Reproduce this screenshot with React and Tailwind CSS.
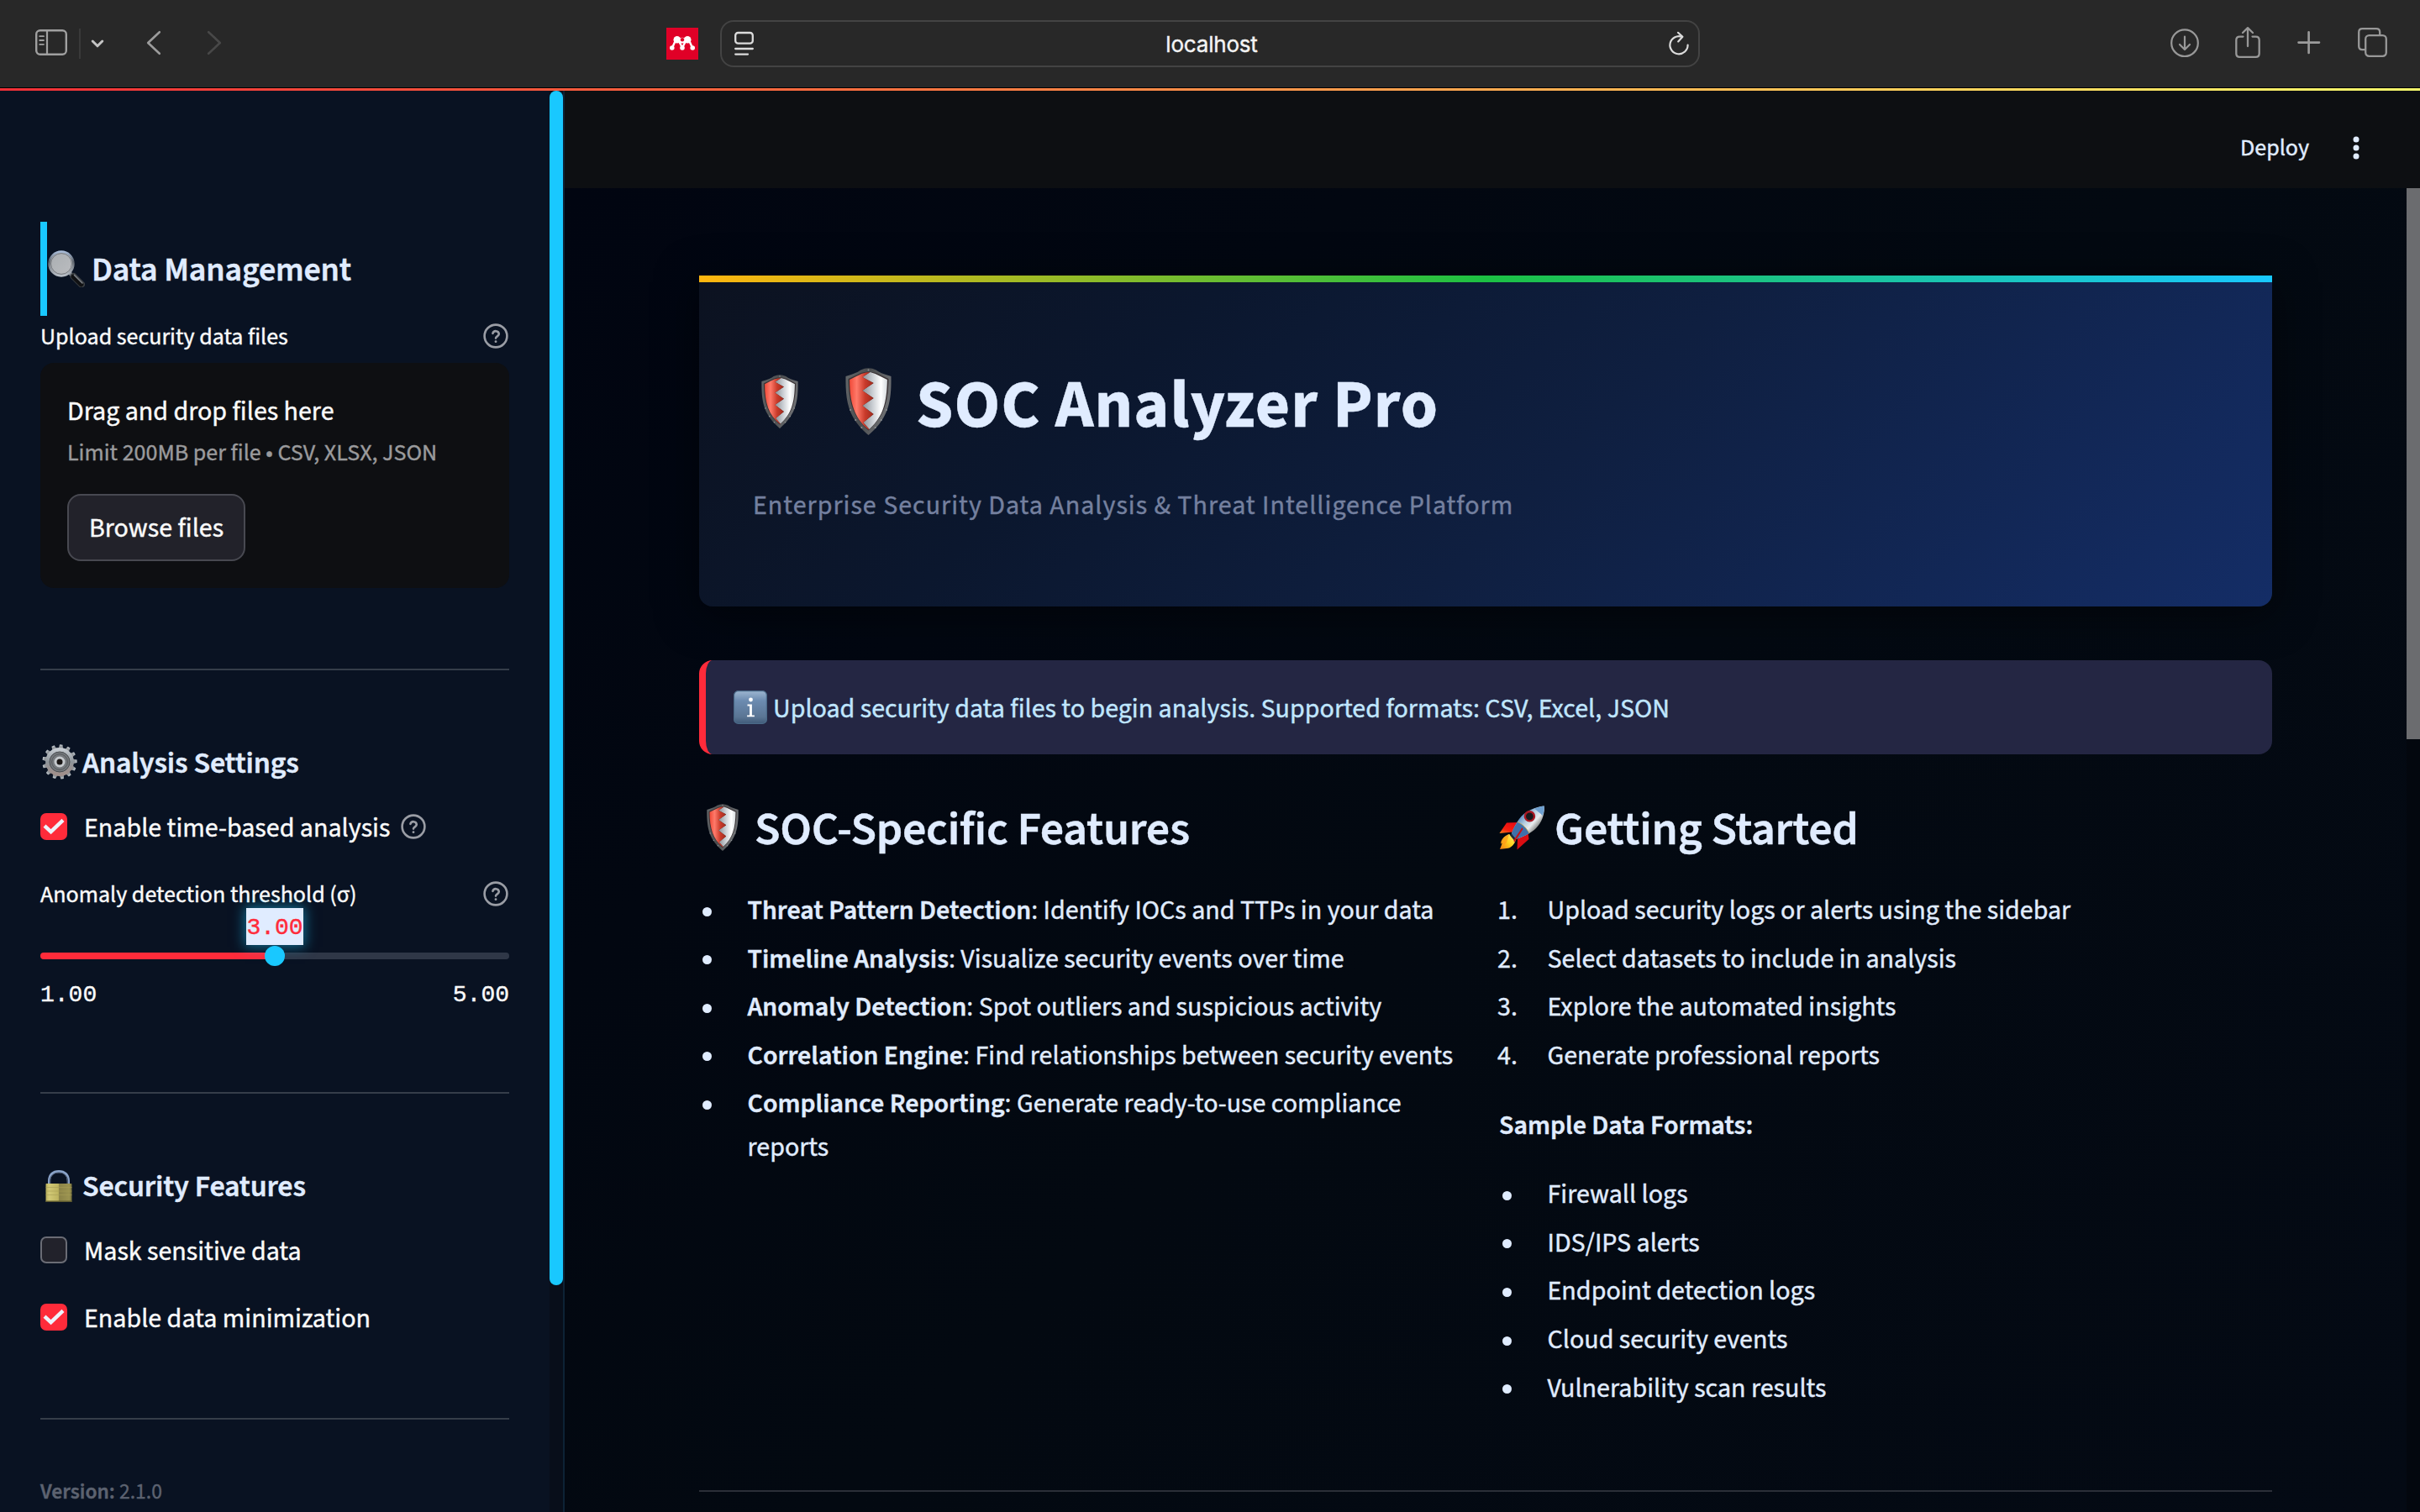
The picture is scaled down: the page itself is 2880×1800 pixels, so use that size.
import React from 'react';

/* ---------- emoji-style pictures ---------- */

function Shield({ className, id }) {
  return (
    <svg viewBox="0 0 54 80" preserveAspectRatio="none" className={className}>
      <defs>
        <linearGradient id={`${id}-rim`} x1="0" x2="1" y1="0" y2="0.3">
          <stop offset="0" stopColor="#63676a" />
          <stop offset="0.5" stopColor="#4a4c4e" />
          <stop offset="1" stopColor="#6d6f72" />
        </linearGradient>
        <linearGradient id={`${id}-red`} x1="0" x2="1">
          <stop offset="0" stopColor="#f04a38" />
          <stop offset="0.3" stopColor="#ff7a6a" />
          <stop offset="0.65" stopColor="#c93a2a" />
          <stop offset="1" stopColor="#9c2b1e" />
        </linearGradient>
        <linearGradient id={`${id}-silver`} x1="0" x2="1">
          <stop offset="0" stopColor="#8b9096" />
          <stop offset="0.4" stopColor="#c9cdd2" />
          <stop offset="0.75" stopColor="#ffffff" />
          <stop offset="1" stopColor="#d5dadd" />
        </linearGradient>
      </defs>
      <path d="M0.5 10 Q14 6 18 2.5 Q27 -1.8 36 2.5 Q40 6 53.5 10 C54 42 50 60 27 80 C4 60 0 42 0.5 10Z" fill={`url(#${id}-rim)`} />
      <path d="M3.5 13 C4 42 9 58 27 74.5 C45 58 50 42 50.5 13 Q42 9 36 6 Q27 3 18 6 Q12 9 3.5 13Z" fill="#3a3234" />
      <path d="M29 5 L20 11 L33 18 L20 27 L33 36 L20 45 L33 55 L21 65 L28 73 C44 58 48.5 42 49 14 Q41 10 35 7Z" fill={`url(#${id}-silver)`} />
      <path d="M29 5 L20 11 L33 18 L20 27 L33 36 L20 45 L33 55 L21 65 L28 73 L27 73.5 C11 60 5 42 5 14 Q13 10 19 7 Q24 5 29 5Z" fill={`url(#${id}-red)`} />
      <g fill="#8d9093">
        <circle cx="6" cy="50" r="1" />
        <circle cx="12" cy="62" r="1" />
        <circle cx="19" cy="71" r="1" />
        <circle cx="48" cy="50" r="1" />
        <circle cx="42" cy="62" r="1" />
        <circle cx="35" cy="71" r="1" />
        <circle cx="27" cy="2.5" r="1" />
      </g>
    </svg>
  );
}

function Magnifier() {
  return (
    <svg viewBox="0 0 44 44" className="h-[44px] w-[44px]">
      <defs>
        <linearGradient id="lens" x1="0" x2="1" y1="0" y2="1">
          <stop offset="0" stopColor="#a9adb1" />
          <stop offset="1" stopColor="#bcbec1" />
        </linearGradient>
        <linearGradient id="lensRim" x1="0" x2="0" y1="0" y2="1">
          <stop offset="0" stopColor="#a9bcd8" />
          <stop offset="0.4" stopColor="#5f656d" />
          <stop offset="1" stopColor="#b9c0c8" />
        </linearGradient>
      </defs>
      <path d="M26 27 L31 32" stroke="#848a92" strokeWidth="4.4" />
      <path d="M30.5 31 L40 40.5" stroke="#3c4044" strokeWidth="8" strokeLinecap="round" />
      <path d="M30.5 31.5 L39.6 40.6" stroke="#101113" strokeWidth="5.6" strokeLinecap="round" />
      <path d="M31.4 29.4 L41 39" stroke="#7c8187" strokeWidth="1.5" strokeLinecap="round" />
      <circle cx="16" cy="16" r="14.4" fill="url(#lens)" stroke="url(#lensRim)" strokeWidth="2.6" />
      <circle cx="16" cy="16" r="12.4" fill="none" stroke="#6f7378" strokeWidth="0.9" />
    </svg>
  );
}

function Gear() {
  return (
    <svg viewBox="-21 -21 42 42" className="h-[42px] w-[42px] -translate-y-[2px]">
      <defs>
        <linearGradient id="gearFill" x1="0" x2="0" y1="0" y2="1">
          <stop offset="0" stopColor="#c3c9cf" />
          <stop offset="0.5" stopColor="#8e9499" />
          <stop offset="1" stopColor="#a08f8b" />
        </linearGradient>
      </defs>
      <g fill="url(#gearFill)">
        {Array.from({ length: 13 }, (_, i) => (
          <path key={i} d="M-2.9 -15 L-1.7 -20.6 L1.7 -20.6 L2.9 -15Z" transform={`rotate(${i * 27.692 + 5})`} />
        ))}
      </g>
      <circle r="14.4" fill="none" stroke="url(#gearFill)" strokeWidth="5" />
      <circle r="12" fill="#75797d" />
      <circle r="12" fill="none" stroke="#4d5053" strokeWidth="1" />
      <circle r="9.4" fill="none" stroke="#55585b" strokeWidth="1" />
      <circle r="5" fill="#1a1716" stroke="#c5c9cd" strokeWidth="3" />
    </svg>
  );
}

function Lock() {
  return (
    <svg viewBox="0 0 32 39" className="h-[39px] w-[32px] -translate-y-px">
      <defs>
        <linearGradient id="lockBody" x1="0" x2="1">
          <stop offset="0" stopColor="#b3ab58" />
          <stop offset="0.12" stopColor="#d2c976" />
          <stop offset="0.48" stopColor="#bdb35f" />
          <stop offset="0.52" stopColor="#8b8347" />
          <stop offset="0.9" stopColor="#9b9350" />
          <stop offset="1" stopColor="#75703c" />
        </linearGradient>
      </defs>
      <path d="M4.6 17 V13 C4.6 5.5 9 1.6 16 1.6 C23 1.6 27.4 5.5 27.4 13 V17" fill="none" stroke="#8aa3c9" strokeWidth="3.2" />
      <path d="M5.4 17 V13 C5.4 7 10 3 16 3 C22 3 26.6 7 26.6 13 V17" fill="none" stroke="#3e4a5c" strokeWidth="0.9" />
      <rect x="0.5" y="16" width="31" height="22" rx="0.8" fill="url(#lockBody)" />
      <path d="M0.5 36.5 h31 v1.5 h-31z" fill="#5d592f" />
      <path d="M0.5 20.5 h31 M0.5 25 h31 M0.5 29.5 h31" stroke="#a79e55" strokeWidth="0.6" />
    </svg>
  );
}

function Rocket() {
  return (
    <svg viewBox="0 0 54 53" className="h-[53px] w-[54px]">
      <defs>
        <linearGradient id="hull" x1="0.25" x2="0.8" y1="0.3" y2="0.8">
          <stop offset="0" stopColor="#4f86c0" />
          <stop offset="0.35" stopColor="#b9cfe0" />
          <stop offset="0.6" stopColor="#e9ecee" />
          <stop offset="1" stopColor="#4b4c48" />
        </linearGradient>
        <linearGradient id="flame" x1="1" x2="0" y1="0" y2="1">
          <stop offset="0" stopColor="#fff27a" />
          <stop offset="0.5" stopColor="#ffd21c" />
          <stop offset="1" stopColor="#f07a12" />
        </linearGradient>
        <linearGradient id="fin" x1="0.6" x2="0" y1="0" y2="1">
          <stop offset="0" stopColor="#e80c12" />
          <stop offset="0.6" stopColor="#f5200f" />
          <stop offset="1" stopColor="#ff8a1a" />
        </linearGradient>
      </defs>
      <path d="M23 20 L9 20.5 L0.5 33 L16 31.5Z" fill="url(#fin)" />
      <path d="M34 28 L35.5 40 L21.5 52.5 L22 40Z" fill="#d90d12" />
      <path d="M12 34 C6 36 1.5 42 3.5 45.5 L1 52 L9 51 C14 51 19 46 20 40Z" fill="url(#flame)" />
      <path d="M12 34 C6 36 1 42 2 46 L5 42 L4 49 L9 44Z" fill="#ff9a1a" opacity="0.7" />
      <path d="M53.6 0.4 C44 1.5 31 6 24 16 C19 23 15.5 30 15 34 L20 40 C27 38 38 33 44 27 C52 19 54.5 8 53.6 0.4Z" fill="url(#hull)" />
      <path d="M53.6 0.4 C49.5 1 45.5 2 42 3.7 C45 6 49 9 51.8 12 C53.4 8 54 4 53.6 0.4Z" fill="#6d9fd0" />
      <path d="M22 19.5 C18.5 25 15.5 30 15 34 L20 40 C25 38.5 31 36 36 33 C33 27 28 22 22 19.5Z" fill="#3f70aa" />
      <path d="M22 19.5 C28 22 33 27 36 33" fill="none" stroke="#d8b24a" strokeWidth="0.8" />
      <path d="M14.5 33 L20.5 40.5 L18 41.5 L13 35.5Z" fill="#1f2a3a" />
      <path d="M27.5 26 L28.5 28 L18 44 L17.5 41Z" fill="#c51317" />
      <circle cx="36.4" cy="12.8" r="5.6" fill="#17181c" stroke="#a81722" strokeWidth="2.4" />
    </svg>
  );
}

function InfoTile() {
  return (
    <svg viewBox="0 0 40 40" className="h-[40px] w-[40px]">
      <defs>
        <linearGradient id="tile" x1="0" x2="0" y1="0" y2="1">
          <stop offset="0" stopColor="#9db6d0" />
          <stop offset="0.3" stopColor="#6c8bb0" />
          <stop offset="0.8" stopColor="#5a7594" />
          <stop offset="1" stopColor="#3f5a78" />
        </linearGradient>
      </defs>
      <rect x="0.6" y="0.6" width="38.8" height="38.8" rx="5" fill="url(#tile)" stroke="#4a6a88" strokeWidth="1.2" />
      <circle cx="20.5" cy="11" r="2.4" fill="#fff" />
      <path d="M16.5 16.4 h5.4 v13 h3 v1.9 h-8.8 v-1.9 h3 v-11 h-2.6z" fill="#fff" />
    </svg>
  );
}

/* ---------- browser toolbar ---------- */

function Toolbar() {
  return (
    <div className="flex h-[104px] shrink-0 items-center bg-[#282828] pr-[39px] pl-[42px]">
      <svg viewBox="0 0 38 104" className="h-[104px] w-[38px] shrink-0" fill="none" stroke="#a0a0a0">
        <rect x="1.2" y="36.2" width="35.6" height="28.6" rx="4.5" strokeWidth="2.4" />
        <path d="M14 36 V65" strokeWidth="2.2" />
        <path d="M5.2 43.2 H10 M5.2 48 H10 M5.2 52.8 H10" strokeWidth="1.8" strokeLinecap="round" />
      </svg>
      <div className="ml-[14px] h-[36px] w-[2px] bg-[#3a3a3a]" />
      <svg viewBox="0 0 16 104" className="ml-[12px] h-[104px] w-[16px] shrink-0" fill="none" stroke="#c4c4c4" strokeWidth="3" strokeLinecap="round" strokeLinejoin="round">
        <path d="M2.2 49 L8 54.8 L13.8 49" />
      </svg>
      <svg viewBox="0 0 18 104" className="ml-[50px] h-[104px] w-[18px] shrink-0" fill="none" stroke="#9c9c9c" strokeWidth="2.6" strokeLinecap="round" strokeLinejoin="round">
        <path d="M15.8 38.2 L2.2 51 L15.8 63.8" />
      </svg>
      <svg viewBox="0 0 18 104" className="ml-[54px] h-[104px] w-[18px] shrink-0" fill="none" stroke="#484848" strokeWidth="2.6" strokeLinecap="round" strokeLinejoin="round">
        <path d="M2.2 38.2 L15.8 51 L2.2 63.8" />
      </svg>
      <svg viewBox="0 0 38 38" className="ml-[529px] h-[38px] w-[38px] shrink-0 bg-[#e00027]">
        <g fill="#fff">
          <circle cx="12.8" cy="14.2" r="4.3" />
          <circle cx="25.2" cy="14.2" r="4.3" />
          <circle cx="19" cy="15.2" r="3.4" />
          <circle cx="6.8" cy="24" r="2.8" />
          <circle cx="19" cy="24" r="2.8" />
          <circle cx="31.2" cy="24" r="2.8" />
        </g>
        <path d="M11 15 L7.4 23 M14.5 15 L18.6 23 M23.5 15 L19.4 23 M27 15 L30.6 23" stroke="#fff" strokeWidth="2.4" />
        <circle cx="19" cy="14.2" r="2.2" fill="#e00027" />
      </svg>
      <div className="ml-[26px] flex h-[56px] w-[1166px] shrink-0 items-center justify-between rounded-[16px] border-2 border-[#434343] pr-[10px] pl-[14px]">
        <svg viewBox="0 0 26 30" className="h-[30px] w-[26px]" fill="none" stroke="#dcdcdc" strokeWidth="2.3" strokeLinecap="round">
          <rect x="2.2" y="2" width="20.6" height="12.6" rx="3.2" />
          <path d="M2.2 21 H22.8 M2.2 27.6 H17" />
        </svg>
        <span className="pt-px font-['Inter'] text-[26px] leading-[40px] tracking-[-0.2px] text-[#f4f4f4]">localhost</span>
        <svg viewBox="0 0 26 30" className="h-[30px] w-[26px]" fill="none" stroke="#dcdcdc" strokeWidth="2.2" strokeLinecap="round" strokeLinejoin="round">
          <path d="M16.5 6.7 A10.6 10.6 0 1 0 23.6 16.6" />
          <path d="M12 1.8 L17.4 6.8 L12.2 12.4" />
        </svg>
      </div>
      <svg viewBox="0 0 34 104" className="ml-auto h-[104px] w-[34px] shrink-0" fill="none" stroke="#989898" strokeWidth="2.2" strokeLinecap="round" strokeLinejoin="round">
        <circle cx="17" cy="51.2" r="15.8" />
        <path d="M17 43.5 V58.5 M11 53 L17 59 L23 53" />
      </svg>
      <svg viewBox="0 0 30 104" className="ml-[43px] h-[104px] w-[30px] shrink-0" fill="none" stroke="#989898" strokeWidth="2.3" strokeLinecap="round" strokeLinejoin="round">
        <path d="M9.5 43.6 H5.5 Q1.3 43.6 1.3 47.8 V63.8 Q1.3 67.9 5.5 67.9 H24.5 Q28.7 67.9 28.7 63.8 V47.8 Q28.7 43.6 24.5 43.6 H20.5" />
        <path d="M15 55 V34 M9 39 L15 33.2 L21 39" />
      </svg>
      <svg viewBox="0 0 28 104" className="ml-[44px] h-[104px] w-[28px] shrink-0" fill="none" stroke="#9c9c9c" strokeWidth="2.6" strokeLinecap="round">
        <path d="M1.5 50.6 H26 M13.6 38.2 V63" />
      </svg>
      <svg viewBox="0 0 35 104" className="ml-[44px] h-[104px] w-[35px] shrink-0" fill="none" stroke="#989898" strokeWidth="2.3" strokeLinejoin="round">
        <rect x="9.2" y="42.2" width="24.6" height="24.6" rx="4.2" />
        <path d="M9.2 59.2 H5.4 Q1.2 59.2 1.2 55 V38.4 Q1.2 34.2 5.4 34.2 H22 Q26.2 34.2 26.2 38.4 V42" />
      </svg>
    </div>
  );
}

/* ---------- sidebar ---------- */

function Help() {
  return (
    <svg viewBox="0 0 30 30" className="h-[30px] w-[30px] shrink-0" fill="none" stroke="#9a9da5" strokeWidth="2.6" strokeLinecap="round" strokeLinejoin="round">
      <circle cx="15" cy="15" r="13.4" />
      <path d="M11.4 11.8 A3.8 3.8 0 0 1 18.8 12.6 C18.8 15 15 15.6 15 17.6" />
      <path d="M15 21.6 V21.7" strokeWidth="2.8" />
    </svg>
  );
}

function Check({ checked, label, help, className }) {
  return (
    <div className={`flex h-[32px] items-center ${className}`}>
      {checked ? (
        <div className="flex h-[32px] w-[32px] items-center justify-center rounded-[7px] bg-[#ff2b3a]">
          <svg viewBox="0 0 26 20" className="h-[20px] w-[26px]" fill="none" stroke="#eef3fb" strokeWidth="4.4">
            <path d="M2 9.2 L9.6 16.2 L24 2.4" />
          </svg>
        </div>
      ) : (
        <div className="h-[32px] w-[32px] rounded-[7px] border-2 border-[#6a6c75] bg-[#22222b]" />
      )}
      <span className="ml-[20px] pt-[4px] text-[32px] leading-[48px] whitespace-nowrap text-[#fafafa]">{label}</span>
      {help && <div className="ml-[13px]"><Help /></div>}
    </div>
  );
}

function FieldLabel({ children, className }) {
  return (
    <div className={`flex h-[50px] shrink-0 items-center justify-between pr-px text-[28px] text-[#fafafa] ${className}`}>
      <span>{children}</span>
      <div className="pb-[2px]"><Help /></div>
    </div>
  );
}

function SideHeading({ icon, children }) {
  return (
    <div className="mt-[85px] flex h-[52px] items-center">
      <div className="flex w-[50px] shrink-0 pl-[2px]">{icon}</div>
      <h3 className="text-[36px] leading-[52px] font-semibold tracking-[-0.005em] whitespace-nowrap text-[#e0ecff]">{children}</h3>
    </div>
  );
}

function Sidebar() {
  return (
    <aside className="flex w-[672px] shrink-0 border-r-2 border-[#0d2235] bg-[#091222]">
      <div className="flex w-[654px] flex-col pt-[156px] pr-[48px] pl-[48px]">
        <div className="flex h-[112px] shrink-0 items-center border-l-8 border-[#19c8ff]">
          <div className="flex w-[53px] shrink-0 pl-px"><Magnifier /></div>
          <h2 className="pt-[3px] text-[40px] leading-[56px] font-semibold tracking-[-0.005em] whitespace-nowrap text-[#e0ecff]">Data Management</h2>
        </div>
        <FieldLabel>Upload security data files</FieldLabel>
        <div className="mt-[6px] flex h-[268px] w-full shrink-0 flex-col items-start rounded-[16px] bg-[#0e0f12] p-[32px]">
          <p className="text-[32px] leading-[52px] text-[#fafafa]">Drag and drop files here</p>
          <p className="text-[28px] leading-[46px] whitespace-nowrap text-[#9a9a9c]">Limit 200MB per file • CSV, XLSX, JSON</p>
          <button className="mt-[26px] flex h-[80px] w-[212px] items-center justify-center rounded-[16px] border-2 border-[#484951] bg-[#22222a] pt-[2px] text-[32px] text-[#fafafa]">Browse files</button>
        </div>
        <hr className="mt-[96px] h-[2px] shrink-0 border-0 bg-[#353d49]" />

        <SideHeading icon={<Gear />}>Analysis Settings</SideHeading>
        <Check checked label="Enable time-based analysis" help className="mt-[33px]" />
        <FieldLabel className="mt-[40px]">Anomaly detection threshold (σ)</FieldLabel>
        <div className="relative mt-[44px] h-[8px] shrink-0 rounded-full bg-[linear-gradient(to_right,#ff2b3a_50%,#2f3747_50%)]">
          <div className="absolute -top-[53px] left-1/2 flex h-[44px] w-[68px] -translate-x-1/2 items-center justify-center bg-[#e0ecff] pt-[3px] font-['Liberation_Mono',monospace] text-[28px] leading-[41px] text-[#ff2b3a] shadow-[0_0_14px_2px_rgba(25,200,255,0.5)]">3.00</div>
          <div className="absolute -top-[8px] left-1/2 size-[24px] -translate-x-1/2 rounded-full bg-[#19c8ff]" />
        </div>
        <div className="mt-[21px] flex h-[44px] shrink-0 items-center justify-between font-['Liberation_Mono',monospace] text-[28px] text-[#fafafa]">
          <span>1.00</span>
          <span>5.00</span>
        </div>
        <hr className="mt-[93px] h-[2px] shrink-0 border-0 bg-[#353d49]" />

        <SideHeading icon={<div className="pl-[4px]"><Lock /></div>}>Security Features</SideHeading>
        <Check label="Mask sensitive data" className="mt-[33px]" />
        <Check checked label="Enable data minimization" className="mt-[48px]" />
        <hr className="mt-[104px] h-[2px] shrink-0 border-0 bg-[#353d49]" />
        <p className="mt-[68px] text-[25.6px] leading-[36px] text-[#5c6270]"><b className="font-semibold">Version:</b> 2.1.0</p>
      </div>
      <div className="w-[16px] bg-[#080e1a]">
        <div className="h-[1422px] rounded-full bg-[#19c8ff]" />
      </div>
    </aside>
  );
}

/* ---------- main ---------- */

function Items({ items, ordered }) {
  return (
    <ul className="flex flex-col gap-[6.4px] text-[32px] leading-[51.2px] text-[#e0ecff]">
      {items.map((it, i) => (
        <li key={i} className="flex">
          {ordered ? (
            <span className="-ml-[2px] w-[59.5px] shrink-0">{i + 1}.</span>
          ) : (
            <span className="flex h-[51.2px] w-[57.5px] shrink-0 items-center pt-[1px] pl-[4px]">
              <i className="size-[11px] rounded-full bg-[#e0ecff]" />
            </span>
          )}
          <span>{it}</span>
        </li>
      ))}
    </ul>
  );
}

const feature = (name, text) => (
  <><b className="font-semibold">{name}</b>: {text}</>
);

const features = [
  feature('Threat Pattern Detection', 'Identify IOCs and TTPs in your data'),
  feature('Timeline Analysis', 'Visualize security events over time'),
  feature('Anomaly Detection', 'Spot outliers and suspicious activity'),
  feature('Correlation Engine', 'Find relationships between security events'),
  feature('Compliance Reporting', 'Generate ready-to-use compliance reports'),
];

const steps = [
  'Upload security logs or alerts using the sidebar',
  'Select datasets to include in analysis',
  'Explore the automated insights',
  'Generate professional reports',
];

const formats = [
  'Firewall logs',
  'IDS/IPS alerts',
  'Endpoint detection logs',
  'Cloud security events',
  'Vulnerability scan results',
];

function Main() {
  return (
    <div className="flex min-w-0 flex-1 flex-col">
      <header className="flex h-[116px] shrink-0 items-center justify-end bg-[#0d0f12] pt-[20px] pr-[72px]">
        <span className="text-[28px] leading-[40px] text-[#e0ecff]">Deploy</span>
        <svg viewBox="0 0 8 28" className="ml-[52px] h-[28px] w-[8px]" fill="#e0ecff">
          <circle cx="4" cy="4" r="3.5" />
          <circle cx="4" cy="14" r="3.5" />
          <circle cx="4" cy="24" r="3.5" />
        </svg>
      </header>

      <div className="flex min-h-0 flex-1">
        <main className="min-w-0 flex-1 bg-[linear-gradient(135deg,#010511_0%,#030911_50%,#040a14_100%)] pt-[104px] pr-[160px] pl-[160px]">
          <section className="flex h-[394px] flex-col overflow-hidden rounded-b-[16px] bg-[linear-gradient(135deg,#0c1220_0%,#0b172e_28%,#0f1f40_55%,#142d66_100%)] shadow-[0_8px_50px_rgba(0,0,0,0.5)]">
            <div className="h-[8px] shrink-0 bg-[linear-gradient(to_right,#ffb60f,#1cc043_50%,#19c8ff)]" />
            <div className="mt-[94px] flex h-[106px] items-center pl-[74px]">
              <Shield id="s1" className="h-[64px] w-[44px] shrink-0 -translate-y-[5px]" />
              <Shield id="s2" className="ml-[56px] h-[80px] w-[55px] shrink-0 -translate-y-[5px]" />
              <h1 className="ml-[29px] text-[80px] leading-[106px] font-bold tracking-[1px] whitespace-nowrap text-[#e0ecff]">SOC Analyzer Pro</h1>
            </div>
            <p className="mt-[40px] pl-[64px] text-[32px] leading-[52px] tracking-[1px] text-[#74809f]">Enterprise Security Data Analysis &amp; Threat Intelligence Platform</p>
          </section>

          <section className="mt-[64px] flex h-[112px] items-center rounded-[16px] border-l-8 border-[#ff2b3a] bg-[#242643] pl-[33px]">
            <InfoTile />
            <p className="ml-[7px] pt-[3px] text-[32px] leading-[52px] text-[#c0e6ff]">Upload security data files to begin analysis. Supported formats: CSV, Excel, JSON</p>
          </section>

          <div className="mt-[54px] grid grid-cols-2 gap-[32px]">
            <div>
              <div className="flex h-[72px] items-center">
                <Shield id="s3" className="ml-[9px] h-[56px] w-[38px] -translate-y-[3px]" />
                <h2 className="ml-[19px] text-[56px] leading-[72px] font-semibold tracking-[-0.005em] whitespace-nowrap text-[#e0ecff]">SOC-Specific Features</h2>
              </div>
              <div className="mt-[35px]"><Items items={features} /></div>
            </div>
            <div>
              <div className="flex h-[72px] items-center">
                <div className="flex -translate-y-[3px]"><Rocket /></div>
                <h2 className="ml-[12px] text-[56px] leading-[72px] font-semibold tracking-[-0.005em] whitespace-nowrap text-[#e0ecff]">Getting Started</h2>
              </div>
              <div className="mt-[35px]"><Items items={steps} ordered /></div>
              <p className="mt-[32px] text-[32px] leading-[51.2px] font-semibold text-[#e0ecff]">Sample Data Formats:</p>
              <div className="mt-[31px]"><Items items={formats} /></div>
            </div>
          </div>
          <hr className="mt-[95px] h-[2px] border-0 bg-[#2b2f38]" />
        </main>
        <div className="w-[16px] bg-[#03070e]">
          <div className="h-[656px] bg-[#6b6c6f]" />
        </div>
      </div>
    </div>
  );
}

export default function App() {
  return (
    <div className="flex h-[1800px] w-[2880px] flex-col overflow-hidden bg-[#010510] font-['Source_Sans_3','Noto_Sans_CJK_SC',sans-serif] [-webkit-text-stroke:0.4px]">
      <Toolbar />
      <div className="h-[4px] shrink-0 border-t border-black bg-[linear-gradient(to_right,#f03038,#ff6f40_35%,#ffd25c_80%,#f6f86c)]" />
      <div className="flex min-h-0 flex-1">
        <Sidebar />
        <Main />
      </div>
    </div>
  );
}
